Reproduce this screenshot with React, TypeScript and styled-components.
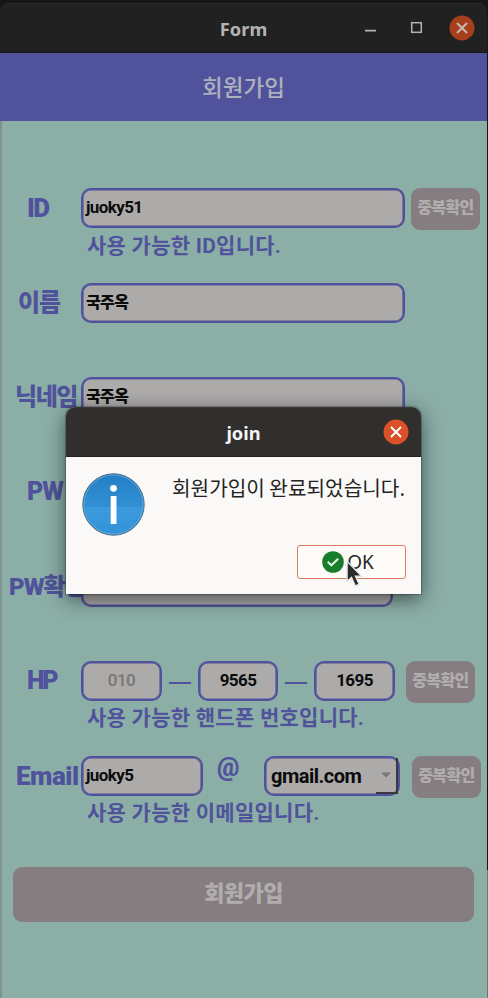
import React from "react";
import styled, { createGlobalStyle } from "styled-components";

const purple = "#50539b";
const uiFont = `"Noto Sans", "Noto Sans CJK KR", sans-serif`;
const formFont = `Roboto, "Noto Sans CJK KR", sans-serif`;

const GlobalStyle = createGlobalStyle`
  * { box-sizing: border-box; }
  body { margin: 0; background: #141414; }
`;

const Desktop = styled.div`
  position: relative;
  width: 488px;
  height: 998px;
  padding: 3px 1px 0 0;
  overflow: hidden;
  background: linear-gradient(#161616 0 870px, #6d7774 870px);
`;

const Window = styled.main`
  display: flex;
  flex-direction: column;
  height: 995px;
  border-radius: 8px 8px 0 0;
  overflow: hidden;
`;

const TitleBar = styled.header<{ $active?: boolean }>`
  display: grid;
  grid-template-columns: 1fr auto 1fr;
  align-items: center;
  flex: none;
  height: 50px;
  padding: 0 12px;
  background: ${(p) => (p.$active ? "#302f2d" : "#222121")};
  border-top: 1px solid ${(p) => (p.$active ? "#3a3937" : "#2b2b2b")};
  border-bottom: 1px solid ${(p) => (p.$active ? "#242322" : "#171720")};
  color: ${(p) => (p.$active ? "#f4f4f4" : "#b4b4b2")};
`;

const WindowTitle = styled.h1`
  grid-column: 2;
  margin: 0;
  padding-top: 1px;
  font: 700 18.3px/24px ${uiFont};
`;

const Controls = styled.div`
  display: flex;
  justify-content: flex-end;
  align-items: center;
  svg { display: block; }
`;

const Banner = styled.div`
  display: flex;
  justify-content: center;
  align-items: center;
  flex: none;
  height: 68px;
  padding-bottom: 2px;
  background: ${purple};
  color: #adb1bd;
  font: 500 22.5px/32px "Noto Sans CJK KR", sans-serif;
`;

const Form = styled.form`
  flex: 1;
  padding-top: 67px;
  background: #8baea7;
  border-left: 2px solid #7f9190;
`;

const Field = styled.section`
  height: 94.7px;
`;

const Line = styled.div`
  display: flex;
  height: 40px;
`;

const Label = styled.label<{ $indent: number; $spacing?: number; $size?: number }>`
  flex: none;
  width: 79px;
  padding-left: ${(p) => p.$indent}px;
  white-space: nowrap;
  color: ${purple};
  font: 900 ${(p) => p.$size ?? 24}px/40px ${formFont};
  letter-spacing: ${(p) => p.$spacing ?? -1}px;
`;

const Input = styled.div<{ $width: number; $centered?: boolean; $muted?: boolean }>`
  flex: none;
  width: ${(p) => p.$width}px;
  height: 40px;
  padding: 0 ${(p) => (p.$centered ? 0 : 3)}px;
  border: 2px solid ${purple};
  border-radius: 10px;
  box-shadow: inset 0 0 0 0.6px ${purple};
  background: #adabaa;
  color: ${(p) => (p.$muted ? "#777675" : "#0b0b0c")};
  text-align: ${(p) => (p.$centered ? "center" : "left")};
  font: ${(p) => (p.$muted ? 500 : 700)} 17px/35px ${formFont};
  letter-spacing: ${(p) => (p.$muted ? -0.5 : -0.6)}px;
`;

const KoreanValue = styled.span`
  font-size: 16px;
  font-weight: 900;
  letter-spacing: -0.6px;
`;

const Hint = styled.p<{ $rise?: number }>`
  margin: ${(p) => 2 - (p.$rise ?? 0)}px 0 0 85px;
  color: ${purple};
  white-space: nowrap;
  font: 700 21px/32px ${formFont};
  letter-spacing: 0.25px;
`;

const CheckButton = styled.button<{ $gap: number }>`
  flex: none;
  width: 69px;
  height: 42px;
  margin: 0 0 0 ${(p) => p.$gap}px;
  padding: 0 0 2px;
  border: 0;
  border-radius: 9px;
  background: #857d80;
  color: #b1adaf;
  font: 900 16px/20px ${formFont};
  letter-spacing: -0.6px;
  white-space: nowrap;
`;

const Dash = styled.span`
  flex: none;
  width: 22px;
  height: 2px;
  margin: 21px 7px 0;
  background: ${purple};
`;

const At = styled.span`
  flex: none;
  width: 61px;
  padding-left: 14px;
  color: ${purple};
  font: 900 25px/24px ${formFont};
`;

const Combo = styled.div`
  display: flex;
  flex: none;
  width: 136px;
  height: 40px;
  border: 2px solid ${purple};
  border-radius: 10px;
  box-shadow: inset 0 0 0 0.6px ${purple};
  background: #adabaa;
  color: #0b0b0c;
  padding-left: 5px;
  font: 700 20px/36px ${formFont};
  letter-spacing: -0.5px;
`;

const ComboArrow = styled.span`
  display: flex;
  align-items: center;
  justify-content: center;
  width: 22px;
  height: 36px;
  margin-left: auto;
  border-right: 2px solid #38373b;
  border-bottom: 2px solid #38373b;
`;

const Submit = styled.button`
  display: block;
  width: 461px;
  height: 55px;
  margin: 16px 0 0 11px;
  padding: 0;
  border: 0;
  border-radius: 9px;
  background: #857d80;
  color: #b1adae;
  font: 900 22px/28px ${formFont};
  letter-spacing: -0.6px;
`;

const Dialog = styled.section`
  position: absolute;
  left: 66px;
  top: 407px;
  width: 355px;
  height: 187px;
  border-radius: 9px 9px 0 0;
  background: #faf9f8;
  box-shadow: 0 0 1px 1px rgba(0, 0, 0, 0.25), 0 5px 20px rgba(0, 0, 0, 0.55);
`;

const DialogBar = styled(TitleBar)`
  border-radius: 9px 9px 0 0;
`;

const Message = styled.div`
  display: flex;
  justify-content: space-between;
  align-items: flex-start;
  height: 88px;
  padding: 16px 16px 0 16px;
`;

const MessageText = styled.p`
  margin: 0;
  padding-top: 1px;
  color: #242322;
  white-space: nowrap;
  font: 400 20.2px/28px "Noto Sans CJK KR", sans-serif;
`;

const OkButton = styled.button`
  display: flex;
  align-items: center;
  justify-content: center;
  width: 109px;
  height: 34px;
  margin: 0 15px 0 auto;
  padding: 0 7px 0 0;
  gap: 3px;
  border: 1px solid #dc7a62;
  border-radius: 3px;
  background: #fdfcf9;
  color: #252525;
  font: 400 19px/26px ${uiFont};
`;

const Pointer = styled.svg`
  position: absolute;
  left: 280px;
  top: 153px;
`;

const CloseIcon = ({ active = false }: { active?: boolean }) => (
  <svg width="26" height="26" viewBox="0 0 26 26">
    <circle cx="13" cy="13" r="12.5" fill={active ? "#dc5028" : "#a83f1c"} />
    <path d="M8 8l10 10M18 8L8 18" stroke={active ? "#fff" : "#c7b9b3"} strokeWidth="2" fill="none" />
  </svg>
);

const WindowButtons = () => (
  <svg width="96" height="26" viewBox="0 0 96 26" fill="none">
    <path d="M12 15.7h11" stroke="#b4b4b2" strokeWidth="1.8" />
    <rect x="58.7" y="7.7" width="9.6" height="9.6" stroke="#b4b4b2" strokeWidth="1.5" />
  </svg>
);

const InfoIcon = () => (
  <svg width="63" height="63" viewBox="0 0 63 63">
    <defs>
      <linearGradient id="info" x1="0" y1="0" x2="0" y2="1">
        <stop offset="0" stopColor="#237fc4" />
        <stop offset=".54" stopColor="#3190d3" />
        <stop offset=".55" stopColor="#3b9bdd" />
        <stop offset="1" stopColor="#3292d7" />
      </linearGradient>
    </defs>
    <circle cx="31.5" cy="31.5" r="30.7" fill="url(#info)" stroke="#4e6576" strokeWidth="1" />
    <circle cx="31.5" cy="31.5" r="29.6" fill="none" stroke="#64b0e5" strokeWidth=".8" />
    <circle cx="31.5" cy="15.3" r="3.4" fill="#fff" />
    <rect x="28.7" y="23" width="5.8" height="28" fill="#fff" />
  </svg>
);

const CheckIcon = () => (
  <svg width="22" height="22" viewBox="0 0 22 22">
    <circle cx="11" cy="11" r="10.8" fill="#187d28" />
    <path d="M5.7 10.8l3.7 3.5 6.8-6.5" fill="none" stroke="#e7f4e5" strokeWidth="2" />
  </svg>
);

export default function App() {
  return (
    <>
      <GlobalStyle />
      <Desktop>
        <Window>
          <TitleBar>
            <WindowTitle>Form</WindowTitle>
            <Controls>
              <WindowButtons />
              <CloseIcon />
            </Controls>
          </TitleBar>
          <Banner>회원가입</Banner>
          <Form>
            <Field>
              <Line>
                <Label $indent={25} $size={26} $spacing={-1.5}>ID</Label>
                <Input $width={324}>juoky51</Input>
                <CheckButton $gap={6} type="button">중복확인</CheckButton>
              </Line>
              <Hint>사용 가능한 ID입니다.</Hint>
            </Field>
            <Field>
              <Line>
                <Label $indent={16}>이름</Label>
                <Input $width={324}><KoreanValue>국주옥</KoreanValue></Input>
              </Line>
            </Field>
            <Field>
              <Line>
                <Label $indent={13} $spacing={-1.4}>닉네임</Label>
                <Input $width={324}><KoreanValue>국주옥</KoreanValue></Input>
              </Line>
            </Field>
            <Field>
              <Line>
                <Label $indent={25} $size={25}>PW</Label>
                <Input $width={312} />
              </Line>
            </Field>
            <Field>
              <Line>
                <Label $indent={7}>PW확인</Label>
                <Input $width={312} />
              </Line>
            </Field>
            <Field>
              <Line>
                <Label $indent={25} $size={25} $spacing={-2.4}>HP</Label>
                <Input $width={81} $centered $muted>010</Input>
                <Dash />
                <Input $width={80} $centered>9565</Input>
                <Dash />
                <Input $width={81} $centered>1695</Input>
                <CheckButton $gap={11} type="button">중복확인</CheckButton>
              </Line>
              <Hint $rise={1}>사용 가능한 핸드폰 번호입니다.</Hint>
            </Field>
            <Field>
              <Line>
                <Label $indent={14} $size={26} $spacing={-0.5}>Email</Label>
                <Input $width={122}>juoky5</Input>
                <At>@</At>
                <Combo>
                  gmail.com
                  <ComboArrow>
                    <svg width="10" height="6" viewBox="0 0 10 6">
                      <path d="M0 0.5h10L5 5.5z" fill="#777" />
                    </svg>
                  </ComboArrow>
                </Combo>
                <CheckButton $gap={12} type="button">중복확인</CheckButton>
              </Line>
              <Hint $rise={1}>사용 가능한 이메일입니다.</Hint>
            </Field>
            <Submit type="button">회원가입</Submit>
          </Form>
        </Window>
        <Dialog>
          <DialogBar as="header" $active>
            <WindowTitle>join</WindowTitle>
            <Controls>
              <CloseIcon active />
            </Controls>
          </DialogBar>
          <Message>
            <InfoIcon />
            <MessageText>회원가입이 완료되었습니다.</MessageText>
          </Message>
          <OkButton type="button">
            <CheckIcon />
            OK
          </OkButton>
          <Pointer width="17" height="28" viewBox="0 0 16 26">
            <path
              d="M1 1v19l4.2-3.7 3.5 8 3.7-1.6-3.5-7.7h5.7z"
              fill="#2b2b2b"
              stroke="#e8e8e8"
              strokeWidth="1.3"
            />
          </Pointer>
        </Dialog>
      </Desktop>
    </>
  );
}
